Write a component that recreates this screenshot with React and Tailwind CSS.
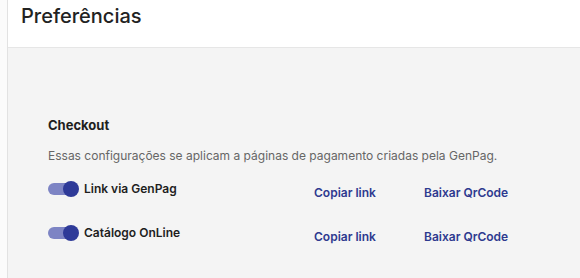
export default function App() {
  const rows = [
    { label: "Link via GenPag" },
    { label: "Catálogo OnLine" },
  ];
  return (
    <div className="w-[580px] h-[278px] flex bg-[#fdfdfd] overflow-hidden" style={{ fontFamily: "Inter, 'Noto Sans', sans-serif" }}>
      <div className="w-[7px] shrink-0 bg-[#fbfbfb]" />
      <div className="flex-1 flex flex-col border-l border-[#e2e2e2]">
        <div className="h-[48px] shrink-0 bg-white border-b border-[#e6e6e6] pl-[13px] pt-[2px]">
          <h1 className="text-[20px] leading-[28px] font-medium text-[#222]">Preferências</h1>
        </div>
        <div className="flex-1 bg-[#f4f4f4] pl-[40px] pt-[68px]">
          <div className="text-[13px] font-bold text-[#1e1e1e] leading-[18px]">Checkout</div>
          <div className="mt-[14px] text-[12px] leading-[16px] text-[#666]">
            Essas configurações se aplicam a páginas de pagamento criadas pela GenPag.
          </div>
          {rows.map((r, i) => (
            <div key={i} className={`flex items-start ${i === 0 ? "mt-[16px]" : "mt-[22px]"}`}>
              <div className="relative w-[31px] h-[18px] shrink-0">
                <div className="absolute left-0 top-[3px] w-[28px] h-[12px] rounded-full bg-[#7d84c4]" />
                <div className="absolute right-0 top-[1px] w-[16px] h-[16px] rounded-full bg-[#2e3a98]" />
              </div>
              <div className="ml-[5px] w-[230px] text-[12px] leading-[18px] font-semibold text-[#1e1e1e]">{r.label}</div>
              <div className="w-[110px] pt-[4px] text-[12px] leading-[18px] font-semibold text-[#2e3a8f]">Copiar link</div>
              <div className="pt-[4px] text-[12px] leading-[18px] font-semibold text-[#2e3a8f]">Baixar QrCode</div>
            </div>
          ))}
        </div>
      </div>
    </div>
  );
}
